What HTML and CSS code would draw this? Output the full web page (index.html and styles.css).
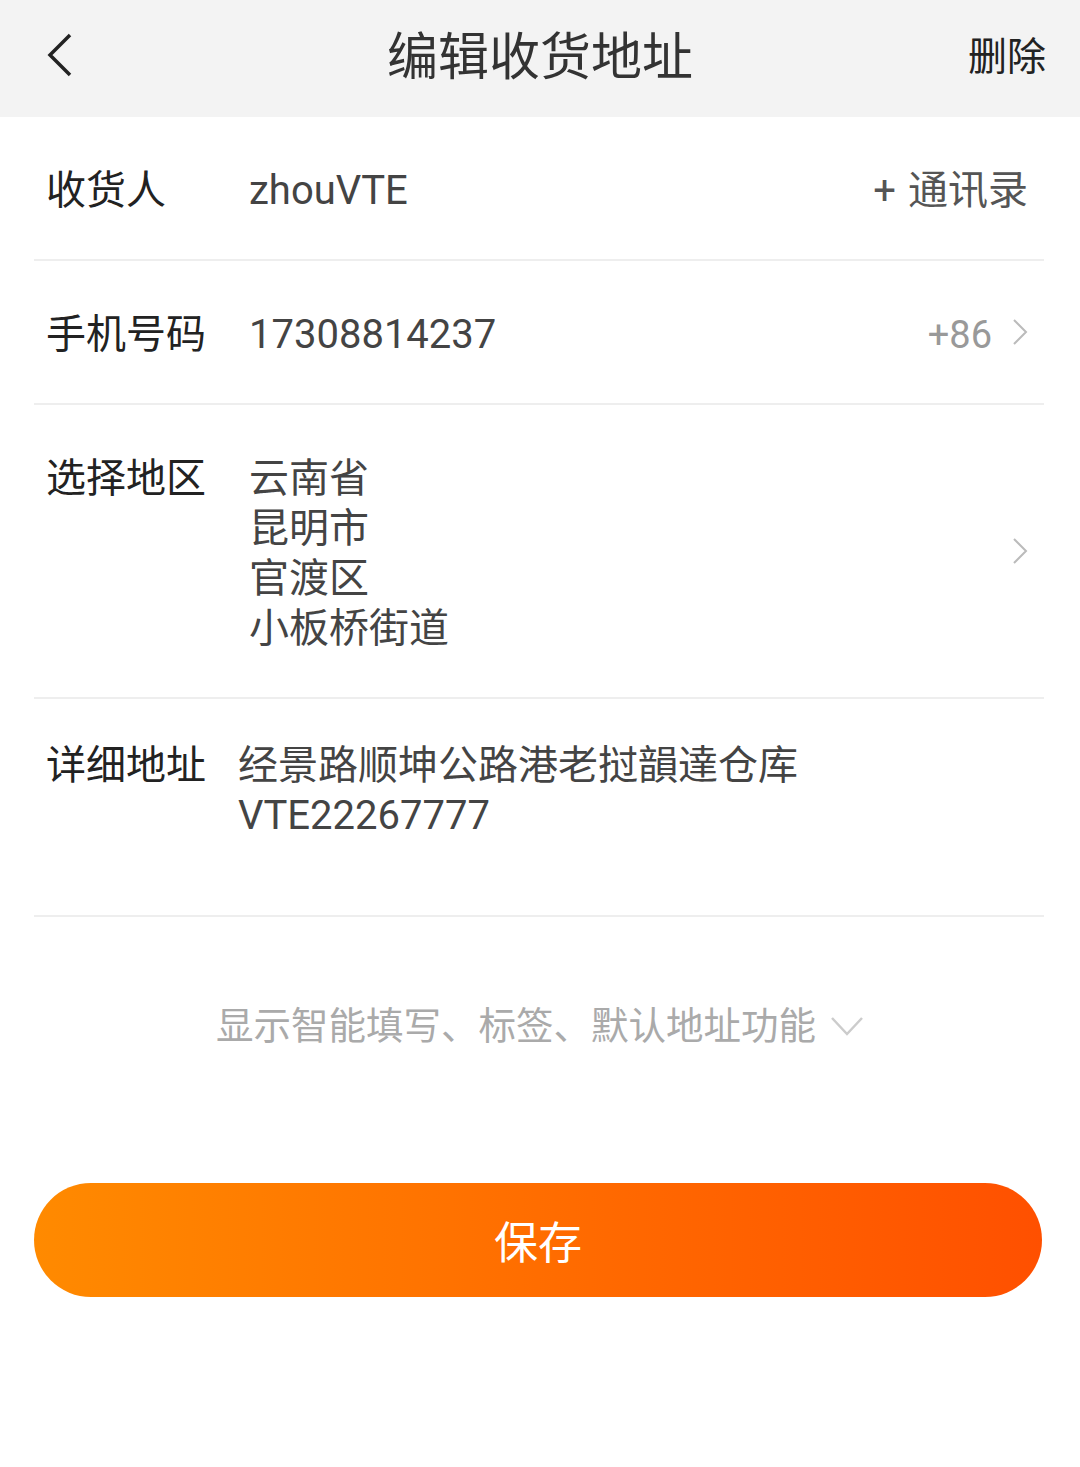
FILE: index.html
```html
<!DOCTYPE html>
<html lang="zh-CN">
<head>
    <meta charset="UTF-8">
    <meta name="viewport" content="width=device-width, initial-scale=1.0">
    <title>编辑收货地址</title>
    <link rel="stylesheet" href="styles.css">
</head>
<body>

    <header class="topbar">
        <a class="back">
            <svg width="28" height="44" viewBox="0 0 28 44"><path d="M24 2 L4 22 L24 42" fill="none" stroke="#222" stroke-width="3.5"/></svg>
        </a>
        <h1 class="title">编辑收货地址</h1>
        <a class="delete">删除</a>
    </header>

    <div class="form">
        <div class="row">
            <span class="label">收货人</span>
            <span class="value">zhouVTE</span>
            <span class="contacts"><span class="plus">+</span>通讯录</span>
        </div>
        <div class="row">
            <span class="label">手机号码</span>
            <span class="value">17308814237</span>
            <span class="code">+86</span>
            <svg class="arrow" width="16" height="28" viewBox="0 0 16 28"><path d="M2 2 L14 14 L2 26" fill="none" stroke="#bbb" stroke-width="2"/></svg>
        </div>
        <div class="row">
            <span class="label">选择地区</span>
            <div class="value">
                云南省<br>
                昆明市<br>
                官渡区<br>
                小板桥街道
            </div>
            <svg class="arrow" width="16" height="28" viewBox="0 0 16 28"><path d="M2 2 L14 14 L2 26" fill="none" stroke="#bbb" stroke-width="2"/></svg>
        </div>
        <div class="row row-detail">
            <span class="label">详细地址</span>
            <div class="value value-detail">经景路顺坤公路港老挝韻達仓库<br>VTE22267777</div>
        </div>
    </div>

    <div class="more">
        显示智能填写、标签、默认地址功能
        <svg width="34" height="20" viewBox="0 0 34 20"><path d="M2 2 L17 18 L32 2" fill="none" stroke="#ccc" stroke-width="2.5"/></svg>
    </div>

    <button class="save">保存</button>

</body>
</html>
```

FILE: styles.css
```css
body {
    margin: 0;
    font-family: Roboto, "Noto Sans CJK SC", sans-serif;
    background-color: #ffffff;
    color: #222;
}
.topbar {
    height: 117px;
    box-sizing: border-box;
    background-color: #f3f3f3;
    display: flex;
    align-items: center;
    justify-content: space-between;
    padding: 0 34px 12px 46px;
    position: relative;
}
.back {
    display: flex;
    margin-top: 4px;
}
.title {
    position: absolute;
    left: 0;
    right: 0;
    top: 0;
    bottom: 12px;
    display: flex;
    align-items: center;
    justify-content: center;
    margin: 0;
    font-size: 51px;
    font-weight: normal;
    color: #333;
    pointer-events: none;
}
.delete {
    font-size: 39px;
    color: #222;
}
.form {
    margin: 0 36px 0 34px;
}
.row {
    display: flex;
    align-items: center;
    padding: 49px 16px 43px 12px;
    border-bottom: 2px solid #eeeeee;
    font-size: 40px;
    line-height: 50px;
}
.label {
    width: 203px;
    flex-shrink: 0;
    align-self: flex-start;
    color: #222;
}
.value {
    flex: 1;
    color: #444;
}
.contacts {
    color: #555;
}
.plus {
    margin-right: 12px;
}
.code {
    color: #999;
    font-size: 38px;
    margin-right: 20px;
}
.arrow {
    display: block;
    margin-bottom: 6px;
}
.row-detail {
    align-items: flex-start;
    padding-top: 42px;
    padding-bottom: 0;
    height: 174px;
}
.value-detail {
    margin-left: -11px;
}
.more {
    padding-top: 84px;
    display: flex;
    align-items: center;
    justify-content: center;
    gap: 14px;
    font-size: 37.5px;
    line-height: 50px;
    color: #aaa;
}
.save {
    display: block;
    margin: 132px auto 0 34px;
    width: 1008px;
    height: 114px;
    border: none;
    border-radius: 57px;
    background: linear-gradient(90deg, #ff8a00, #ff5000);
    color: #ffffff;
    font-family: Roboto, "Noto Sans CJK SC", sans-serif;
    font-size: 44px;
}
```
